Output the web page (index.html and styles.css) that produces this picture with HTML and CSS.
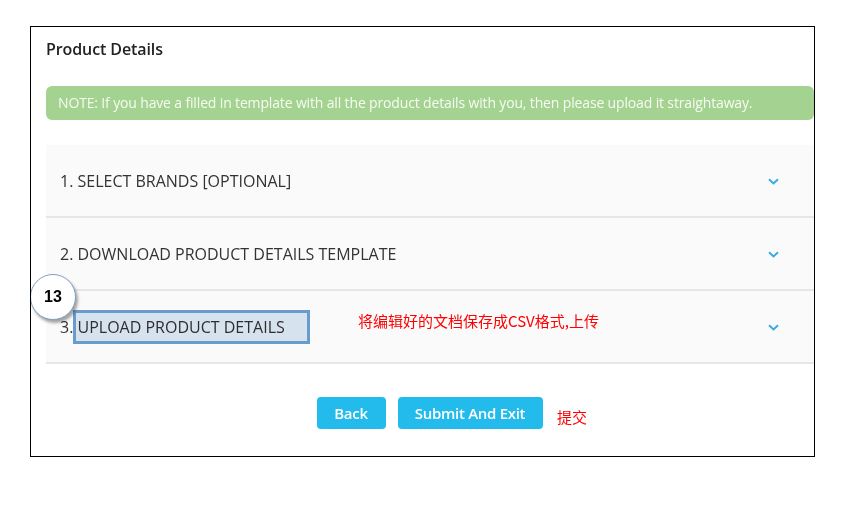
FILE: index.html
```html
<!DOCTYPE html>
<html>
<head>
<meta charset="utf-8">
<link rel="stylesheet" href="styles.css">
</head>
<body>
<div class="frame">
  <h2 class="title">Product Details</h2>
  <div class="note">NOTE: If you have a filled in template with all the product details with you, then please upload it straightaway.</div>
  <div class="accordion">
    <div class="row"><span class="label">1. SELECT BRANDS [OPTIONAL]</span><svg class="chev" width="11" height="7" viewBox="0 0 11 7"><path d="M1 1.2 L5.5 5.4 L10 1.2" fill="none" stroke="#3ba9e8" stroke-width="2"/></svg></div>
    <div class="row"><span class="label">2. DOWNLOAD PRODUCT DETAILS TEMPLATE</span><svg class="chev" width="11" height="7" viewBox="0 0 11 7"><path d="M1 1.2 L5.5 5.4 L10 1.2" fill="none" stroke="#3ba9e8" stroke-width="2"/></svg></div>
    <div class="row"><span class="label">3. UPLOAD PRODUCT DETAILS</span><svg class="chev" width="11" height="7" viewBox="0 0 11 7"><path d="M1 1.2 L5.5 5.4 L10 1.2" fill="none" stroke="#3ba9e8" stroke-width="2"/></svg></div>
  </div>
  <div class="actions">
    <button class="btn btn-back">Back</button>
    <button class="btn btn-submit">Submit And Exit</button>
  </div>
  <div class="hl-box"></div>
  <div class="badge">13</div>
  <div class="anno anno-csv">将编辑好的文档保存成CSV格式,上传</div>
  <div class="anno anno-submit">提交</div>
</div>
</body>
</html>
```

FILE: styles.css
```css
* { box-sizing: border-box; }
html, body { margin: 0; padding: 0; background: #ffffff; }
body { font-family: "Open Sans", "Noto Sans", sans-serif; }
.frame {
  position: relative;
  margin: 26px 0 0 30px;
  width: 785px;
  height: 431px;
  border: 1px solid #000;
  padding: 0 0 0 15px;
  overflow: hidden;
}
.title {
  margin: 0;
  padding-top: 11px;
  height: 59px;
  font-size: 16px;
  font-weight: 600;
  color: #222;
  letter-spacing: -0.1px;
}
.note {
  height: 34px;
  background: #a4d290;
  border-radius: 6px;
  color: #f6fbf3;
  font-size: 14px;
  line-height: 34px;
  padding-left: 12px;
  letter-spacing: -0.15px;
  white-space: nowrap;
}
.accordion { margin-top: 25px; }
.row {
  height: 73px;
  background: #fafafa;
  border-bottom: 2px solid #e6e6e6;
  display: flex;
  align-items: center;
  justify-content: space-between;
  padding: 0 35px 0 14px;
}
.label {
  font-size: 16px;
  color: #333;
  letter-spacing: 0;
}
.chev { display: block; margin-top: 2px; }
.actions {
  display: flex;
  justify-content: center;
  gap: 12px;
  margin-top: 33px;
  padding-right: 1px;
}
.btn {
  height: 32px;
  border: 0;
  border-radius: 4px;
  background: #23bbeb;
  color: #fff;
  font-family: "Open Sans", "Noto Sans", sans-serif;
  font-weight: 600;
  font-size: 15px;
  letter-spacing: -0.3px;
}
.btn-back { width: 69px; }
.btn-submit { width: 145px; }
.hl-box {
  position: absolute;
  left: 42px;
  top: 283px;
  width: 237px;
  height: 34px;
  border: 3px solid #6a9fd0;
  background: #dce7f4;
  mix-blend-mode: multiply;
}
.badge {
  position: absolute;
  left: -1px;
  top: 247px;
  width: 46px;
  height: 46px;
  border-radius: 50%;
  background: #fff;
  border: 1px solid #7f9fc2;
  box-shadow: 2px 3px 3px rgba(0,0,0,0.35);
  font-family: "Liberation Sans", Arial, sans-serif;
  font-weight: bold;
  font-size: 16px;
  color: #000;
  display: flex;
  align-items: center;
  justify-content: center;
}
.anno {
  position: absolute;
  color: #ff0000;
  font-family: "Noto Sans CJK SC", "Liberation Sans", sans-serif;
  font-size: 15px;
  white-space: nowrap;
}
.anno-csv { left: 327px; top: 283px; }
.anno-submit { left: 526px; top: 379px; }
```
